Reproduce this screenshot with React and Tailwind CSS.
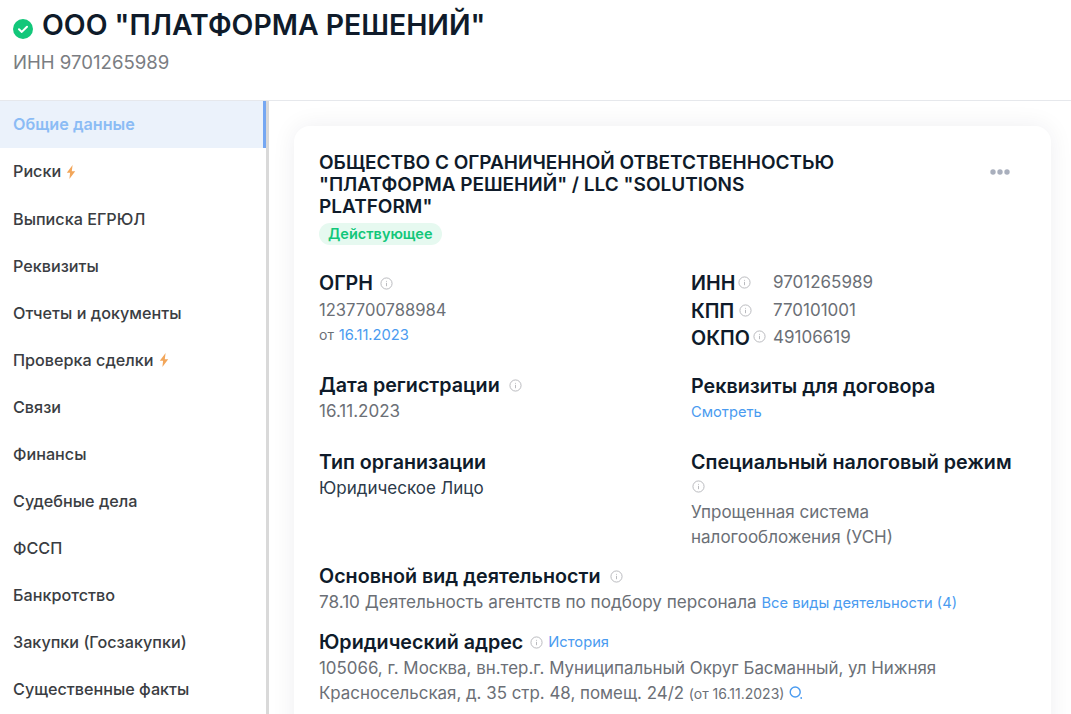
const navItems = [
  { label: 'Общие данные', active: true },
  { label: 'Риски', bolt: true },
  { label: 'Выписка ЕГРЮЛ' },
  { label: 'Реквизиты' },
  { label: 'Отчеты и документы' },
  { label: 'Проверка сделки', bolt: true },
  { label: 'Связи' },
  { label: 'Финансы' },
  { label: 'Судебные дела' },
  { label: 'ФССП' },
  { label: 'Банкротство' },
  { label: 'Закупки (Госзакупки)' },
  { label: 'Существенные факты' },
];

const Info = ({ className = '' }) => (
  <svg viewBox="0 0 14 14" className={`w-[13px] h-[13px] shrink-0 ${className}`} fill="none" stroke="#b4b6ba" strokeWidth="1">
    <circle cx="7" cy="7" r="6" />
    <path d="M7 6.3v3.6M7 4.2v.9" />
  </svg>
);

const Bolt = () => (
  <svg viewBox="0 0 10 14" className="w-[10px] h-[14px] ml-[5px] mt-[1px]" fill="#f2a65a">
    <path d="M6.6 0 .8 7.8h3.3L3.4 14l5.8-7.8H5.8z" />
  </svg>
);

const Label = ({ children, className = '' }) => (
  <span className={`text-[19.7px] leading-[26px] font-semibold whitespace-nowrap text-[#0f1b2a] ${className}`}>{children}</span>
);

const Link = ({ children, className = '' }) => (
  <a className={`text-[14.7px] text-[#4a9bf0] ${className}`}>{children}</a>
);

const App = () => {
  return (
    <div className="h-[714px] overflow-hidden bg-white font-['Inter',sans-serif] text-[#6b6f76]">
      <header className="h-[101px] border-b border-[#e6e8ec] pl-[13px] pt-[5px]">
        <div className="flex items-center">
          <svg viewBox="0 0 20 20" className="w-5 h-5 mt-2 mr-[9px]">
            <circle cx="10" cy="10" r="10" fill="#12c77a" />
            <path d="M6 10.3l2.8 2.6L14 7.8" fill="none" stroke="#fff" strokeWidth="2" strokeLinecap="round" strokeLinejoin="round" />
          </svg>
          <h1 className="text-[28.4px] leading-[40px] font-semibold text-[#0f1b2a]">ООО "ПЛАТФОРМА РЕШЕНИЙ"</h1>
        </div>
        <p className="text-[18.6px] leading-[24px] mt-[5px] text-[#7a7d82]">ИНН 9701265989</p>
      </header>
      <div className="flex">
        <nav className="w-[269px] h-[613px] shrink-0 border-r-[3px] border-[#d9d9d9]">
          {navItems.map((item) => (
            <div
              key={item.label}
              className={`h-[47.07px] flex items-center pl-[13px] text-[16.2px] font-medium ${
                item.active ? 'bg-[#ebf2fb] text-[#8bbcf5] font-semibold border-r-[3px] border-[#75a7f2]' : 'text-[#3a3d42]'
              }`}
            >
              {item.label}
              {item.bolt && <Bolt />}
            </div>
          ))}
        </nav>
        <main className="flex-1 min-w-0 pl-[25px] pr-[20px] pt-[25px]">
          <section className="h-[640px] rounded-[16px] bg-white shadow-[0_0_24px_rgba(20,30,50,0.07)] pl-[25px] pr-[20px] pt-[26px]">
            <div className="flex justify-between items-start">
              <div className="w-[540px]">
                <h2 className="text-[19px] leading-[22px] font-semibold text-[#0f1b2a]">
                  ОБЩЕСТВО С ОГРАНИЧЕННОЙ ОТВЕТСТВЕННОСТЬЮ "ПЛАТФОРМА РЕШЕНИЙ" / LLC "SOLUTIONS PLATFORM"
                </h2>
                <span className="inline-block mt-[5px] h-[22px] px-[9px] rounded-full bg-[#e6f9f0] text-[#12c77a] text-[14.5px] leading-[22px] font-semibold">
                  Действующее
                </span>
              </div>
              <svg viewBox="0 0 20 6" className="w-5 h-[6px] mt-[17px] mr-[21px]" fill="#a9afbd">
                <circle cx="3" cy="3" r="2.7" />
                <circle cx="10" cy="3" r="2.7" />
                <circle cx="17" cy="3" r="2.7" />
              </svg>
            </div>

            <div className="grid grid-cols-[372px_1fr] mt-[23px]">
              <div className="h-[104px]">
                <div className="flex items-center gap-[7px] mt-[2px]"><Label>ОГРН</Label><Info /></div>
                <p className="text-[16.6px] leading-[24px] mt-[2px]">1237700788984</p>
                <p className="text-[14px] leading-[25px]">от <Link className="ml-[1px]">16.11.2023</Link></p>
              </div>
              <div className="grid grid-cols-[82px_1fr] auto-rows-[27.7px] mt-[1px] text-[17px] text-[#6b6f76]">
                <div className="flex items-center gap-[3px]"><Label>ИНН</Label><Info /></div>
                <div className="flex items-center">9701265989</div>
                <div className="flex items-center gap-[5px]"><Label>КПП</Label><Info /></div>
                <div className="flex items-center">770101001</div>
                <div className="flex items-center gap-[3px]"><Label>ОКПО</Label><Info className="-mt-[4px]" /></div>
                <div className="flex items-center">49106619</div>
              </div>

              <div className="h-[77px]">
                <div className="flex items-center gap-[9px]"><Label>Дата регистрации</Label><Info /></div>
                <p className="text-[17px] leading-[24px] mt-[1px]">16.11.2023</p>
              </div>
              <div className="pt-[1px]">
                <Label>Реквизиты для договора</Label>
                <p className="leading-[24px]"><Link>Смотреть</Link></p>
              </div>

              <div>
                <Label>Тип организации</Label>
                <p className="text-[17px] leading-[24px] mt-[1px] text-[#2c3a4a]">Юридическое Лицо</p>
              </div>
              <div className="h-[102px]">
                <Label className="block">Специальный налоговый режим</Label>
                <Info className="mt-[5px] mb-[7px] ml-[1px]" />
                <p className="text-[17px] leading-[25px]">Упрощенная система<br />налогообложения (УСН)</p>
              </div>
            </div>

            <div className="mt-[12px]">
              <div className="flex items-center gap-[10px]"><Label>Основной вид деятельности</Label><Info /></div>
              <p className="text-[17.15px] leading-[25px] whitespace-nowrap">
                78.10 Деятельность агентств по подбору персонала <Link>Все виды деятельности (4)</Link>
              </p>
            </div>
            <div className="mt-[13px]">
              <div className="flex items-center gap-[6px]">
                <Label className="mr-[1px]">Юридический адрес</Label><Info className="-mr-[1px]" /><Link>История</Link>
              </div>
              <p className="text-[16.9px] leading-[25px] mt-[1px] whitespace-nowrap">
                105066, г. Москва, вн.тер.г. Муниципальный Округ Басманный, ул Нижняя<br />
                Красносельская, д. 35 стр. 48, помещ. 24/2 <span className="text-[14px]">(от 16.11.2023)</span>
                <svg viewBox="0 0 14 14" className="inline w-[14px] h-[14px] ml-[5px] align-[-1px]" fill="none" stroke="#4a9bf0" strokeWidth="1.4">
                  <circle cx="6.2" cy="6" r="5" />
                  <circle cx="12.2" cy="12" r="0.9" fill="#4a9bf0" stroke="none" />
                </svg>
              </p>
            </div>
          </section>
        </main>
      </div>
    </div>
  );
};

export default App;
